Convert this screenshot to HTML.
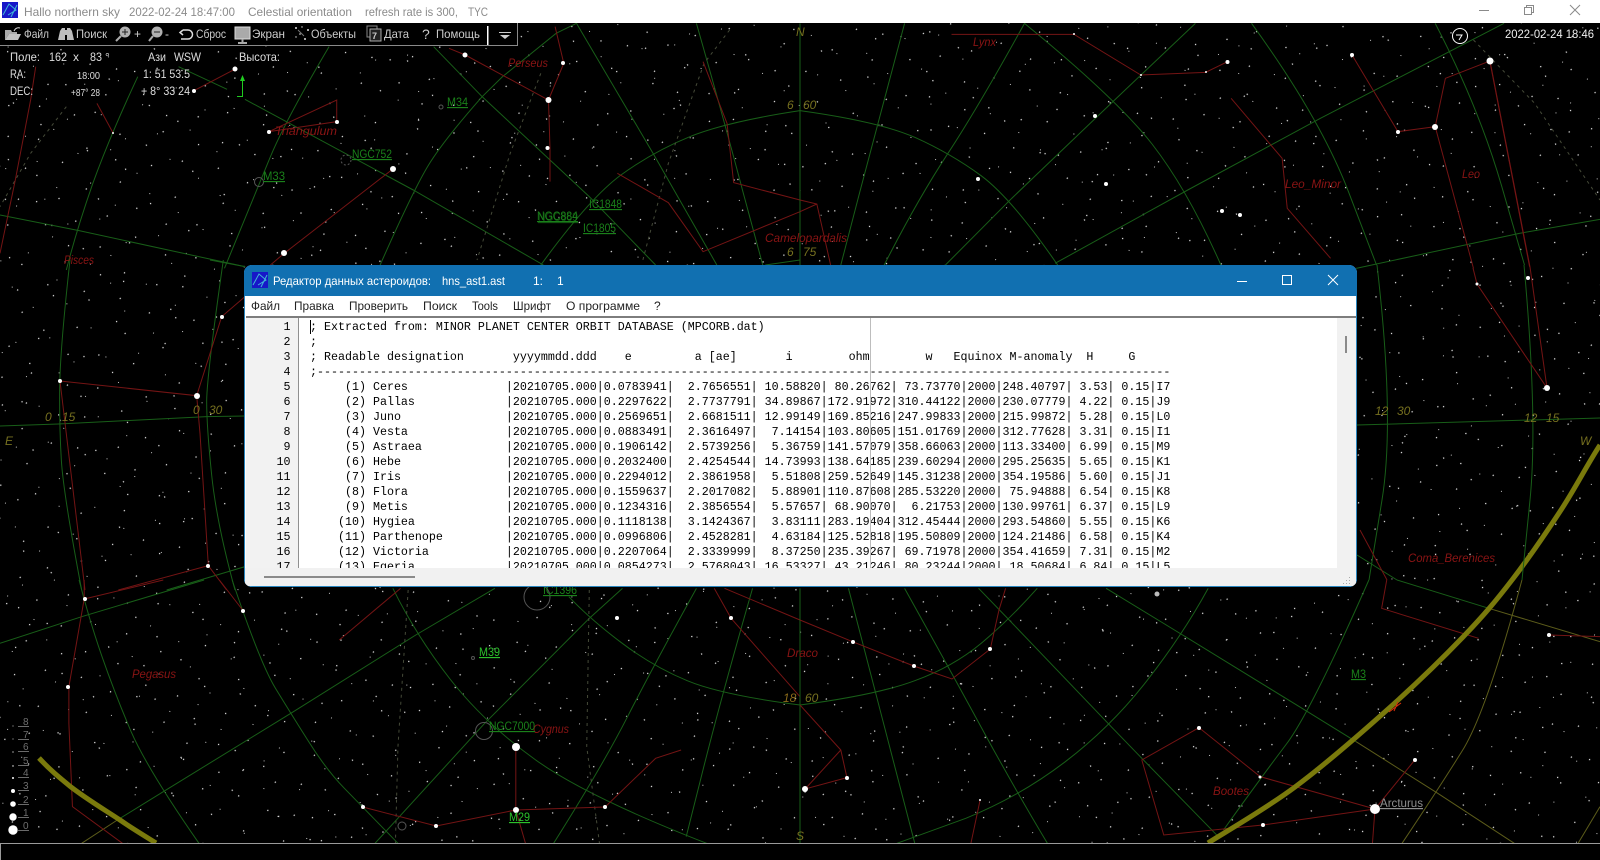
<!DOCTYPE html>
<html lang="ru"><head><meta charset="utf-8"><title>Hallo northern sky</title>
<style>
html,body{margin:0;padding:0;background:#000;width:1600px;height:860px;overflow:hidden}
svg{position:absolute;left:0;top:0}
text{font-family:"Liberation Sans","Noto Sans CJK SC",sans-serif}
#sky path{fill:none;vector-effect:non-scaling-stroke;stroke-width:1}
.g{stroke:#185e18}.r{stroke:#741414}.o{stroke:#5c5c1a}
.d{stroke:#454a38;stroke-dasharray:3 4}
.e{stroke:#7a7a0c!important;stroke-width:5px!important}
.cl{fill:#8a1414;font-size:11.5px;font-style:italic}
.ds{fill:#1a801a;font-size:11.5px;text-decoration:underline}
.db{fill:#2bc02b;font-size:11.5px;text-decoration:underline}
.ol{fill:#76701f;font-size:12px;font-style:italic}
.hud{fill:#ddd;font-size:12px}
.tb{fill:#ccc;font-size:12px}
.tt{fill:#8b8b8b;font-size:12px}
.mn{fill:#222;font-size:12px}
.wt{fill:#fff;font-size:12px}
#win{position:absolute;left:243.5px;top:265px;width:1113.5px;height:321.5px;background:#fff;border-radius:8px;overflow:hidden;box-shadow:0 0 0 1px #2a86bf inset}
#tbar{position:absolute;left:0;top:0;right:0;height:31px;background:#1170b1}
#rule{position:absolute;left:2px;right:1px;top:51px;height:2px;background:#7d7d7d}
#gut{position:absolute;left:2px;top:53px;width:52px;height:250px;background:#f2f2f2;border-right:1px solid #8f8f8f}
#marg{position:absolute;left:626px;top:53px;width:1px;height:250px;background:#bdbdbd}
#vs{position:absolute;right:1px;top:53px;width:19px;height:250px;background:#f1f1f1}
#vt{position:absolute;left:8px;top:18px;width:2px;height:17px;background:#8a8a8a}
#hs{position:absolute;left:1px;right:1px;bottom:1px;height:18px;background:#f1f1f1}
#ht{position:absolute;left:19px;top:8px;width:151px;height:2.5px;background:#8a8a8a}
#clip{position:absolute;left:0;top:53px;width:1093px;height:250px;overflow:hidden}
pre{position:absolute;margin:0;font:11.667px/15px "Liberation Mono",monospace;color:#000;top:2px}
#nums{left:2px;width:45px;text-align:right}
#txt{left:66.5px}
#caret{position:absolute;left:66px;top:2px;width:1.5px;height:14px;background:#000}
</style></head><body>
<svg id="sky" width="1600" height="860" viewBox="0 0 1600 860">
<defs>
<pattern id="s1" width="197" height="163" patternUnits="userSpaceOnUse" patternTransform="rotate(37)"><path style="stroke:#f4f4f4;stroke-width:1.2px" d="M12 7h1.200M45 19h1.200M78 3h1.200M103 28h1.200M141 12h1.200M176 35h1.200M23 41h1.200M61 52h1.200M95 61h1.200M128 47h1.200M158 66h1.200M188 58h1.200M8 73h1.200M37 84h1.200M70 79h1.200M114 88h1.200M147 92h1.200M182 99h1.200M18 108h1.200M52 116h1.200M88 104h1.200M121 119h1.200M166 123h1.200M193 131h1.200M31 137h1.200M66 143h1.200M99 133h1.200M134 148h1.200M171 152h1.200M5 155h1.200M48 159h1.200M110 160h1.200M150 139h1.200"/></pattern>
<pattern id="s2" width="263" height="229" patternUnits="userSpaceOnUse" patternTransform="rotate(13)"><path style="stroke:#c4c4c4;stroke-width:1.1px" d="M5 14h1M33 6h1M59 25h1M84 11h1M118 31h1M147 8h1M171 22h1M206 15h1M239 29h1M18 44h1M47 57h1M76 48h1M101 63h1M133 52h1M162 70h1M191 46h1M224 61h1M252 53h1M9 81h1M38 93h1M67 86h1M92 101h1M124 89h1M153 107h1M183 95h1M214 84h1M245 99h1M24 118h1M55 127h1M81 114h1M110 132h1M141 121h1M172 138h1M201 117h1M233 129h1M258 141h1M13 152h1M43 163h1M72 149h1M97 170h1M129 158h1M158 174h1M189 155h1M221 167h1M249 178h1M29 189h1M62 197h1M88 184h1M116 203h1M146 191h1M177 208h1M207 194h1M238 205h1M6 214h1M50 221h1M104 219h1M165 224h1M226 218h1"/></pattern>
<pattern id="s3" width="151" height="211" patternUnits="userSpaceOnUse" patternTransform="rotate(-21)"><path style="stroke:#eee;stroke-width:1.2px" d="M20 10h1.200M67 33h1.200M118 18h1.200M41 59h1.200M93 72h1.200M139 51h1.200M14 96h1.200M73 113h1.200M126 101h1.200M48 139h1.200M101 152h1.200M144 131h1.200M27 172h1.200M84 188h1.200M122 177h1.200M56 203h1.200"/></pattern>
</defs>
<rect width="1600" height="860" fill="#000"/>
<rect width="1600" height="860" fill="url(#s2)"/>
<rect width="1600" height="860" fill="url(#s1)"/>
<rect width="1600" height="860" fill="url(#s3)"/>

<!-- top-left zone -->
<g transform="translate(0,20) scale(.5102,.33333)">
<path class="g" d="M0 585L155 632L480 740"/>
<path class="g" d="M645 80Q560 300 530 410Q500 520 440 745"/>
<path class="g" d="M270 170Q215 350 182 490Q150 630 130 750"/>
<path class="g" d="M1130 10L1280 400L1405 735"/>
<path class="g" d="M1130 10L1090 40L985 170L945 230Q870 360 840 435Q810 510 745 735"/>
<path class="g" d="M850 80L945 230L1155 530L1285 735"/>
<path class="g" d="M350 140L445 208M480 238L810 510L1065 735"/>
<path class="g" d="M1568 272Q1425 305 1352 350Q1280 395 1217 465Q1155 535 1060 735"/>
<path class="g" d="M1365 10Q1420 305 1457 520L1495 735"/>
<path class="g" d="M1500 735L1568 720"/>
<path class="d" d="M1430 30L1380 130L1310 430L1260 720"/>
<path class="d" d="M1060 160L1000 400L935 720"/>
<path class="d" d="M130 260L60 400L0 560"/>
<path class="r" d="M1088 20L1105 130L1075 240M880 85L912 105L1075 240L1078 385L1078 485"/>
<path class="r" d="M527 335L660 240L660 305L527 335"/>
<path class="r" d="M770 447L557 700L530 735"/>
<path class="r" d="M380 212L460 148"/>
<path class="r" d="M190 250L222 340"/>
<path class="r" d="M70 140L60 240L30 480L0 700"/>
<path class="r" d="M1378 125L1425 310L1438 488L1568 540"/>
<path class="r" d="M1210 460L1310 548L1378 695L1568 575"/>
</g>
<!-- top-right zone -->
<g transform="translate(800,20) scale(.5102,.33333)">
<path class="g" d="M205 10Q155 300 117 517L80 735"/>
<path class="g" d="M440 10Q350 260 290 400Q230 540 165 735"/>
<path class="g" d="M775 10L620 235L415 535L285 735"/>
<path class="g" d="M440 10Q620 235 690 372Q760 510 825 735"/>
<path class="g" d="M885 10Q1020 295 1075 515L1130 735"/>
<path class="g" d="M1245 10Q1330 260 1375 497L1420 735"/>
<path class="g" d="M1380 10L1020 295L760 510L500 730"/>
<path class="g" d="M0 272Q155 305 225 352Q295 400 355 467Q415 535 505 735"/>
<path class="g" d="M1568 598L1410 640L1090 745"/>
<path class="g" d="M0 10V735"/>
<path class="d" d="M1320 60L1440 250L1568 540"/>
<path class="r" d="M297 43L537 43L668 165L795 157L838 125"/>
<path class="r" d="M1082 105L1172 335L1245 320L1265 175L1352 123L1430 740"/>
<path class="r" d="M1245 320L1320 745"/>
<path class="r" d="M845 235L945 415L955 565L1040 715"/>
<path class="r" d="M0 540L33 552L60 735M33 552L0 575"/>
</g>
<!-- bottom-left zone -->
<g transform="translate(0,580) scale(.5102,.33333)">
<path class="g" d="M0 190L160 110L400 0"/>
<path class="g" d="M155 0Q175 120 200 230Q225 340 257 455Q290 570 390 790"/>
<path class="g" d="M455 0Q510 250 540 325Q570 400 605 485Q640 570 675 625L780 790"/>
<path class="g" d="M970 25L815 165L570 400L320 635L230 720"/>
<path class="o" d="M230 720L160 790"/>
<path class="g" d="M770 25Q815 165 882 297Q950 430 1050 540Q1150 650 1385 790"/>
<path class="g" d="M1220 25L1155 115L950 430L735 790"/>
<path class="g" d="M1115 50Q1155 115 1217 187Q1280 260 1347 302Q1415 345 1568 375"/>
<path class="g" d="M1365 25Q1280 260 1230 410Q1180 560 1085 790"/>
<path class="g" d="M1475 25Q1415 345 1380 557L1345 770"/>
<path class="d" d="M800 30L780 500L775 790M1155 30L1150 500L1175 790"/>
<path class="r" d="M165 0L165 57L135 320L135 430L142 680L240 790M165 57L320 0"/>
<path class="r" d="M430 0L477 93"/>
<path class="r" d="M785 25L665 180"/>
<path class="r" d="M1400 25L1433 115L1568 350M1420 25L1568 120"/>
<path class="r" d="M711 681L855 738L1011 690L1186 681L1285 535L1335 510"/>
<path class="r" d="M1011 500L1011 690L1030 790"/>
</g>
<!-- bottom-right zone -->
<g transform="translate(800,580) scale(.5102,.33333)">
<path class="g" d="M0 25V790"/>
<path class="g" d="M95 25Q150 345 187 567L225 790"/>
<path class="g" d="M205 25Q305 300 367 475Q430 650 485 790"/>
<path class="g" d="M350 25L410 120L610 440L670 535L820 770"/>
<path class="g" d="M0 375Q150 345 225 302Q300 260 355 190Q410 120 465 25"/>
<path class="g" d="M800 25Q750 165 680 302Q610 440 520 545Q430 650 325 715L190 790"/>
<path class="g" d="M600 25L750 165L1000 400L1090 485"/>
<path class="o" d="M1090 485L1250 640L1400 790"/>
<path class="g" d="M1115 0Q1000 400 952 495Q905 590 830 750"/>
<path class="g" d="M1170 0L1350 85"/>
<path class="o" d="M1350 85L1568 185"/>
<path class="o" d="M1415 0Q1345 400 1297 515Q1250 630 1180 790"/>
<path class="o" d="M1568 680L1525 790"/>
<path class="r" d="M0 120L103 185L223 258L298 297L373 207L390 90L403 25"/>
<path class="r" d="M1150 0L1140 85L1330 175"/>
<path class="r" d="M1468 165L1568 170"/>
<path class="r" d="M0 375L80 510L92 593L10 627L80 510"/>
<path class="r" d="M782 443L670 540L713 765L907 735L1127 687L902 590L782 443"/>
<path class="r" d="M1127 687L1205 540M1127 687L1122 790"/>
<path class="r" d="M353 660L335 790"/>
</g>
<!-- ecliptic -->
<path class="e" d="M39 758C50 770 60 778 71 787C88 800 105 810 120 820C133 829 145 836 156 843"/>
<path class="e" d="M1208 843C1222.500 833.700 1265.200 809.200 1295 787C1324.800 764.800 1359 735 1387 710C1415 685 1442.200 658.700 1463 637C1483.800 615.300 1495.700 601.200 1512 580C1528.300 558.800 1546.300 532.500 1561 510C1575.700 487.500 1587 465 1600 445"/>
<path style="stroke:#d8300c" d="M1389 712L1401 703M1394 711L1398 702"/>
<!-- left and right middle -->
<g transform="translate(0,260) scale(.33333)">
<path class="g" d="M210 0Q180 270 179 385Q178 500 184 600Q190 700 245 990"/>
<path class="g" d="M670 0Q620 350 620 425Q620 500 635 645Q650 790 705 990"/>
<path class="g" d="M0 498L175 492L620 470L735 468"/>
<path class="g" d="M630 0L735 20"/>
<path class="g" d="M500 990L735 920"/>
<path class="r" d="M180 363L590 407L665 170L735 110"/>
<path class="r" d="M180 363L255 990"/>
<path class="r" d="M590 407L600 520L625 917L355 990M625 917L680 990"/>
</g>
<path class="g" d="M1357 425L1600 418"/>
<path class="g" d="M1377 265Q1395 420 1382 500L1369 580"/>
<path class="g" d="M1524 265Q1538 420 1530 500L1522 580"/>
<path class="g" d="M1357 555L1397 580"/>
<path class="r" d="M1490 61L1530 267L1547 388"/>
<path class="r" d="M1473 268L1477 284L1547 388"/>
<path class="r" d="M1360 530L1387 580"/>
<!-- DSO rings -->
<g fill="none" stroke="#555">
<circle cx="537" cy="597" r="13"/><circle cx="484" cy="731" r="8.500"/><circle cx="402" cy="826" r="4"/>
<circle cx="259" cy="182" r="4.500"/><circle cx="346" cy="160" r="5" stroke-dasharray="2 2"/><circle cx="473" cy="658" r="1.500"/><circle cx="441" cy="107" r="2"/>
</g>
<!-- stars -->
<g fill="#fff">
<circle cx="465" cy="55" r="2.500"/><circle cx="563" cy="63" r="2"/><circle cx="548.500" cy="100" r="3"/><circle cx="547.500" cy="148" r="2"/><circle cx="337" cy="122" r="2"/><circle cx="269" cy="132" r="2"/><circle cx="393" cy="169" r="3"/><circle cx="284" cy="253" r="3"/><circle cx="235" cy="69" r="2.500"/><circle cx="194" cy="91" r="2"/><circle cx="113" cy="133" r="1"/>
<circle cx="1227.500" cy="62" r="2"/><circle cx="1352" cy="55" r="2"/><circle cx="1398" cy="132" r="2"/><circle cx="1435" cy="127" r="3"/><circle cx="1490" cy="61" r="3.500"/><circle cx="1095" cy="116" r="2"/><circle cx="1106" cy="184" r="2"/><circle cx="978" cy="179" r="2"/><circle cx="1222" cy="211" r="2"/><circle cx="1240" cy="215" r="2"/><circle cx="1074" cy="34" r="1"/><circle cx="1141" cy="75" r="1"/><circle cx="1206" cy="72" r="1"/>
<circle cx="85" cy="599" r="2"/><circle cx="243" cy="611" r="2"/><circle cx="68" cy="687" r="2"/><circle cx="617" cy="618" r="2"/><circle cx="731" cy="618" r="2"/><circle cx="516" cy="747" r="4"/><circle cx="516" cy="810" r="3"/><circle cx="363" cy="807" r="2"/><circle cx="436" cy="826" r="2"/><circle cx="605" cy="807" r="2"/>
<circle cx="853" cy="642" r="2"/><circle cx="914" cy="666" r="2"/><circle cx="990" cy="649" r="2"/><circle cx="847" cy="778" r="2"/><circle cx="805" cy="789" r="3"/><circle cx="1199" cy="728" r="2"/><circle cx="1260" cy="777" r="1.500"/><circle cx="1263" cy="825" r="2"/><circle cx="1375" cy="809" r="5"/><circle cx="1415" cy="760" r="2"/><circle cx="1549" cy="635" r="2"/><circle cx="980" cy="800" r="1"/>
<circle cx="60" cy="381" r="2"/><circle cx="197" cy="396" r="3"/><circle cx="222" cy="317" r="2"/><circle cx="208" cy="566" r="2"/>
<circle cx="1547" cy="388" r="3"/><circle cx="1528" cy="278" r="2"/><circle cx="1477" cy="284" r="1.500"/>
<circle cx="1157" cy="594" r="2.500" fill="#bbb"/>
</g>
<!-- labels -->
<text class="cl" x="508" y="67" textLength="40" lengthAdjust="spacingAndGlyphs">Perseus</text>
<text class="cl" x="275" y="135" textLength="62" lengthAdjust="spacingAndGlyphs">Triangulum</text>
<text class="cl" x="64" y="264" textLength="30" lengthAdjust="spacingAndGlyphs">Pisces</text>
<text class="cl" x="765" y="242" textLength="82" lengthAdjust="spacingAndGlyphs">Camelopardalis</text>
<text class="cl" x="973" y="46" textLength="23" lengthAdjust="spacingAndGlyphs">Lynx</text>
<text class="cl" x="1285" y="188" textLength="56" lengthAdjust="spacingAndGlyphs">Leo_Minor</text>
<text class="cl" x="1462" y="178" textLength="18" lengthAdjust="spacingAndGlyphs">Leo</text>
<text class="cl" x="1408" y="562" textLength="87" lengthAdjust="spacingAndGlyphs">Coma_Berenices</text>
<text class="cl" x="132" y="678" textLength="44" lengthAdjust="spacingAndGlyphs">Pegasus</text>
<text class="cl" x="533" y="733" textLength="36" lengthAdjust="spacingAndGlyphs">Cygnus</text>
<text class="cl" x="787" y="657" textLength="31" lengthAdjust="spacingAndGlyphs">Draco</text>
<text class="cl" x="1213" y="795" textLength="36" lengthAdjust="spacingAndGlyphs">Bootes</text>
<text class="ds" x="447" y="106" textLength="21" lengthAdjust="spacingAndGlyphs">M34</text>
<text class="ds" x="352" y="158" textLength="40" lengthAdjust="spacingAndGlyphs">NGC752</text>
<text class="ds" x="263" y="180" textLength="22" lengthAdjust="spacingAndGlyphs">M33</text>
<text class="ds" x="589" y="208" textLength="33" lengthAdjust="spacingAndGlyphs">IC1848</text>
<text class="ds" x="537" y="220" textLength="41" lengthAdjust="spacingAndGlyphs">NGC884</text>
<text class="ds" x="538" y="221" textLength="40" lengthAdjust="spacingAndGlyphs" style="opacity:.6">NGC869</text>
<text class="ds" x="583" y="232" textLength="33" lengthAdjust="spacingAndGlyphs">IC1805</text>
<text class="ds" x="543" y="594" textLength="34" lengthAdjust="spacingAndGlyphs">IC1396</text>
<text class="db" x="479" y="656" textLength="21" lengthAdjust="spacingAndGlyphs">M39</text>
<text class="ds" x="489" y="730" textLength="46" lengthAdjust="spacingAndGlyphs">NGC7000</text>
<text class="db" x="509" y="821" textLength="21" lengthAdjust="spacingAndGlyphs">M29</text>
<text class="ds" x="1351" y="678" textLength="15" lengthAdjust="spacingAndGlyphs">M3</text>
<text x="1380" y="807" fill="#8f8f8f" font-size="12" text-decoration="underline" textLength="43" lengthAdjust="spacingAndGlyphs">Arcturus</text>
<text class="ol" x="45" y="421">0</text><text class="ol" x="62" y="421">15</text>
<text class="ol" x="193" y="414">0</text><text class="ol" x="209" y="414">30</text>
<text class="ol" x="5" y="445">E</text>
<text class="ol" x="787" y="109">6</text><text class="ol" x="803" y="109">60</text>
<text class="ol" x="787" y="256">6</text><text class="ol" x="803" y="256">75</text>
<text class="ol" x="783" y="702" style="fill:#8a6a1a">18</text><text class="ol" x="805" y="702">60</text>
<text class="ol" x="1375" y="415">12</text><text class="ol" x="1397" y="415">30</text>
<text class="ol" x="1524" y="422">12</text><text class="ol" x="1546" y="422">15</text>
<text class="ol" x="1580" y="445">W</text>
<text class="ol" x="796" y="36">N</text>
<text class="ol" x="796" y="840">S</text>
<!-- bottom bar -->
<rect x="0" y="843" width="1600" height="17" fill="#000"/>
<rect x="0" y="843" width="1600" height="1" fill="#9a9a9a"/>
<rect x="0" y="843" width="1" height="17" fill="#9a9a9a"/>
<!-- magnitude scale -->
<g fill="#6f6f6f" font-size="10">
<text x="23" y="829">0</text><text x="23" y="816">1</text><text x="23" y="803">2</text><text x="23" y="789">3</text><text x="23" y="776">4</text><text x="23" y="764">5</text><text x="23" y="750">6</text><text x="23" y="738">7</text><text x="23" y="725">8</text>
</g>
<path style="stroke:#6a6a6a" d="M18 830.500H29M18 817.500H29M18 804.500H29M18 790.500H29M18 777.500H29M18 765.500H29M18 751.500H29M18 739.500H29M18 726.500H29"/>
<g fill="#fff"><circle cx="13" cy="830" r="4.700"/><circle cx="13" cy="817" r="3.700"/><circle cx="13" cy="804" r="2.800"/><circle cx="13" cy="791" r="2"/><circle cx="13" cy="778" r="1"/><circle cx="13" cy="766" r=".7"/><circle cx="13" cy="752" r=".6"/><circle cx="13" cy="739" r=".5"/><circle cx="13" cy="726" r=".5"/></g>
<!-- title bar -->
<rect width="1600" height="23" fill="#fff"/>
<rect x="2" y="2" width="16" height="16" fill="#1717c8"/>
<path style="stroke:#3fb6d8" d="M3 15L9 4L16 10L8 15M11 17L17 5"/>
<text class="tt" x="24" y="16" textLength="96" lengthAdjust="spacingAndGlyphs">Hallo northern sky</text>
<text class="tt" x="129" y="16" textLength="106" lengthAdjust="spacingAndGlyphs">2022-02-24  18:47:00</text>
<text class="tt" x="248" y="16" textLength="104" lengthAdjust="spacingAndGlyphs">Celestial orientation</text>
<text class="tt" x="365" y="16" textLength="93" lengthAdjust="spacingAndGlyphs">refresh rate is 300,</text>
<text class="tt" x="468" y="16" textLength="20" lengthAdjust="spacingAndGlyphs">TYC</text>
<path style="stroke:#8a8a8a" d="M1479 10.500H1489M1570 5L1580 15M1580 5L1570 15"/>
<rect x="1524.500" y="7.500" width="7" height="7" fill="#fff" stroke="#8a8a8a"/>
<path style="stroke:#8a8a8a" d="M1526.500 7V5.500H1533.500V12.500H1532"/>
<!-- toolbar -->
<rect x="0" y="23" width="517" height="22" fill="#000"/>
<path style="stroke:#8a8a8a" d="M0 45.500H517.500V23"/>
<g>
<path style="fill:#a8a8a8" d="M5 40V30H11L12 32H17V34H9L5 40Z"/><path style="fill:#c2c2c2" d="M5 40L9 34H21L18 40Z"/><path style="stroke:#ddd" d="M14 31Q16 27 20 28"/>
<path style="fill:#bdbdbd" d="M58 40L60 31L62 28H65V30H67V28H70L72 31L74 40H67V35H65V40Z"/>
<circle cx="125" cy="32" r="5.500" fill="#b0b0b0"/><path style="stroke:#aaa;stroke-width:2px" d="M121 36L116 41"/><path style="stroke:#222" d="M122 32H128M125 29V35"/>
<text class="tb" x="134" y="38">+</text>
<circle cx="157" cy="32" r="5.500" fill="#b0b0b0"/><path style="stroke:#aaa;stroke-width:2px" d="M153 36L149 41"/><path style="stroke:#222" d="M154 32H160"/>
<text class="tb" x="165" y="38">-</text>
<path style="stroke:#ddd;stroke-width:1.500px" d="M183 30H188A4.500 4.500 0 0 1 188 39H181M183 30L180 32.500L183 35"/>
<rect x="235" y="27" width="15" height="12" fill="#aaa" stroke="#ddd"/><path style="stroke:#aaa;stroke-width:2px" d="M242.500 39V42M238 43H247"/>
<g fill="#ddd"><circle cx="296" cy="28" r="1"/><circle cx="308" cy="30" r="1"/><circle cx="300" cy="34" r=".8"/><circle cx="305" cy="39" r="1"/><circle cx="296" cy="37" r=".7"/><circle cx="302" cy="27" r=".7"/></g><path style="stroke:#777" d="M298 30L304 36"/>
<rect x="367" y="26" width="10" height="11" fill="none" stroke="#888"/><rect x="370" y="29" width="11" height="12" fill="#222" stroke="#aaa"/><text x="372" y="39" font-size="9" font-weight="bold" fill="#ccc">7</text>
<text class="tb" x="24" y="38" textLength="25" lengthAdjust="spacingAndGlyphs">Файл</text>
<text class="tb" x="76" y="38" textLength="31" lengthAdjust="spacingAndGlyphs">Поиск</text>
<text class="tb" x="196" y="38" textLength="30" lengthAdjust="spacingAndGlyphs">Сброс</text>
<text class="tb" x="252" y="38" textLength="33" lengthAdjust="spacingAndGlyphs">Экран</text>
<text class="tb" x="311" y="38" textLength="45" lengthAdjust="spacingAndGlyphs">Объекты</text>
<text class="tb" x="384" y="38" textLength="25" lengthAdjust="spacingAndGlyphs">Дата</text>
<text x="422" y="39" font-size="14" fill="#ccc">?</text>
<text class="tb" x="436" y="38" textLength="44" lengthAdjust="spacingAndGlyphs">Помощь</text>
<rect x="487" y="26" width="1.500" height="19" fill="#fff"/>
<path style="stroke:#ccc" d="M499 32.500H511"/><path style="fill:#ccc" d="M500 35H510L505 39Z"/>
</g>
<!-- hud -->
<text class="hud" x="10" y="61" textLength="30" lengthAdjust="spacingAndGlyphs">Поле:</text>
<text class="hud" x="49" y="61" textLength="18" lengthAdjust="spacingAndGlyphs">162</text>
<text class="hud" x="73" y="61">x</text>
<text class="hud" x="90" y="61" textLength="12" lengthAdjust="spacingAndGlyphs">83</text>
<text class="hud" x="105" y="61">°</text>
<text class="hud" x="148" y="61" textLength="18" lengthAdjust="spacingAndGlyphs">Ази</text>
<text class="hud" x="174" y="61" textLength="27" lengthAdjust="spacingAndGlyphs">WSW</text>
<text class="hud" x="239" y="61" textLength="41" lengthAdjust="spacingAndGlyphs">Высота:</text>
<text class="hud" x="10" y="78" textLength="16" lengthAdjust="spacingAndGlyphs">RA:</text>
<text class="hud" x="77" y="79" style="font-size:10px" textLength="23" lengthAdjust="spacingAndGlyphs">18:00</text>
<text class="hud" x="143" y="78" textLength="47" lengthAdjust="spacingAndGlyphs">1: 51 53.5</text>
<text class="hud" x="10" y="95" textLength="23" lengthAdjust="spacingAndGlyphs">DEC:</text>
<text class="hud" x="71" y="96" style="font-size:10px" textLength="29" lengthAdjust="spacingAndGlyphs">+87° 28</text>
<text class="hud" x="141" y="95" textLength="49" lengthAdjust="spacingAndGlyphs">+ 8° 33 24</text>
<path style="stroke:#20cc20" d="M242.500 79V96.500H237"/><path style="fill:#20cc20" d="M242.500 75L245 81H240Z"/>
<circle cx="1460" cy="36" r="7.500" fill="#000" stroke="#fff"/>
<path style="stroke:#fff" d="M1456 35H1462L1459 40"/>
<text x="1505" y="38" fill="#eee" font-size="12" textLength="89" lengthAdjust="spacingAndGlyphs">2022-02-24  18:46</text>
</svg>

<div id="win">
<div id="tbar"></div>
<div id="rule"></div>
<div id="gut"></div>
<div id="clip">
<pre id="nums">1
2
3
4
5
6
7
8
9
10
11
12
13
14
15
16
17</pre>
<pre id="txt">; Extracted from: MINOR PLANET CENTER ORBIT DATABASE (MPCORB.dat)
;
; Readable designation       yyyymmdd.ddd    e         a [ae]       i        ohm        w   Equinox M-anomaly  H     G
;--------------------------------------------------------------------------------------------------------------------------
     (1) Ceres              |20210705.000|0.0783941|  2.7656551| 10.58820| 80.26762| 73.73770|2000|248.40797| 3.53| 0.15|I7
     (2) Pallas             |20210705.000|0.2297622|  2.7737791| 34.89867|172.91972|310.44122|2000|230.07779| 4.22| 0.15|J9
     (3) Juno               |20210705.000|0.2569651|  2.6681511| 12.99149|169.85216|247.99833|2000|215.99872| 5.28| 0.15|L0
     (4) Vesta              |20210705.000|0.0883491|  2.3616497|  7.14154|103.80605|151.01769|2000|312.77628| 3.31| 0.15|I1
     (5) Astraea            |20210705.000|0.1906142|  2.5739256|  5.36759|141.57079|358.66063|2000|113.33400| 6.99| 0.15|M9
     (6) Hebe               |20210705.000|0.2032400|  2.4254544| 14.73993|138.64185|239.60294|2000|295.25635| 5.65| 0.15|K1
     (7) Iris               |20210705.000|0.2294012|  2.3861958|  5.51808|259.52649|145.31238|2000|354.19586| 5.60| 0.15|J1
     (8) Flora              |20210705.000|0.1559637|  2.2017082|  5.88901|110.87608|285.53220|2000| 75.94888| 6.54| 0.15|K8
     (9) Metis              |20210705.000|0.1234316|  2.3856554|  5.57657| 68.90070|  6.21753|2000|130.99761| 6.37| 0.15|L9
    (10) Hygiea             |20210705.000|0.1118138|  3.1424367|  3.83111|283.19404|312.45444|2000|293.54860| 5.55| 0.15|K6
    (11) Parthenope         |20210705.000|0.0996806|  2.4528281|  4.63184|125.52818|195.50809|2000|124.21486| 6.58| 0.15|K4
    (12) Victoria           |20210705.000|0.2207064|  2.3339999|  8.37250|235.39267| 69.71978|2000|354.41659| 7.31| 0.15|M2
    (13) Egeria             |20210705.000|0.0854273|  2.5768043| 16.53327| 43.21246| 80.23244|2000| 18.50684| 6.84| 0.15|L5</pre>
<div id="caret"></div>
</div>
<div id="marg"></div>
<div id="vs"><div id="vt"></div></div>
<div id="hs"><div id="ht"></div></div>
</div>

<svg width="1600" height="860" viewBox="0 0 1600 860" style="pointer-events:none">
<rect x="252" y="272" width="16" height="16" fill="#1717c8"/>
<path d="M253 285L259 274L266 280L258 285M261 287L267 275" fill="none" stroke="#3fb6d8"/>
<text class="wt" x="273" y="285" textLength="158" lengthAdjust="spacingAndGlyphs">Редактор данных астероидов:</text>
<text class="wt" x="442" y="285" textLength="63" lengthAdjust="spacingAndGlyphs">hns_ast1.ast</text>
<text class="wt" x="533" y="285">1:</text><text class="wt" x="557" y="285">1</text>
<path d="M1237 281.500H1247M1328 275L1338 285M1338 275L1328 285" fill="none" stroke="#fff"/>
<rect x="1282.500" y="275.500" width="9" height="9" fill="none" stroke="#fff"/>
<text class="mn" x="251" y="310" textLength="29" lengthAdjust="spacingAndGlyphs">Файл</text>
<text class="mn" x="294" y="310" textLength="40" lengthAdjust="spacingAndGlyphs">Правка</text>
<text class="mn" x="349" y="310" textLength="59" lengthAdjust="spacingAndGlyphs">Проверить</text>
<text class="mn" x="423" y="310" textLength="34" lengthAdjust="spacingAndGlyphs">Поиск</text>
<text class="mn" x="472" y="310" textLength="26" lengthAdjust="spacingAndGlyphs">Tools</text>
<text class="mn" x="513" y="310" textLength="38" lengthAdjust="spacingAndGlyphs">Шрифт</text>
<text class="mn" x="566" y="310" textLength="74" lengthAdjust="spacingAndGlyphs">О программе</text>
<text class="mn" x="654" y="310">?</text>
<g fill="#aaa"><rect x="1349" y="577" width="1" height="1"/><rect x="1346" y="580" width="1" height="1"/><rect x="1349" y="580" width="1" height="1"/><rect x="1343" y="583" width="1" height="1"/><rect x="1346" y="583" width="1" height="1"/><rect x="1349" y="583" width="1" height="1"/></g>
</svg>
</body></html>
